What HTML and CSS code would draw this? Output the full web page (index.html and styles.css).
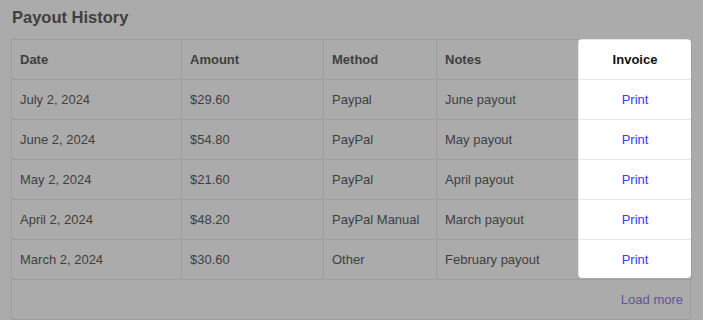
FILE: index.html
```html
<!DOCTYPE html>
<html lang="en">
<head>
    <meta charset="UTF-8">
    <meta name="viewport" content="width=device-width, initial-scale=1.0">
    <link rel="stylesheet" href="styles.css">
</head>
<body>

    <div class="payouts">
        <h2 class="payouts-title">Payout History</h2>

        <div class="table-wrap">
            <table class="payout-table">
                <colgroup>
                    <col class="col-date">
                    <col class="col-amount">
                    <col class="col-method">
                    <col class="col-notes">
                    <col class="col-invoice-w">
                </colgroup>
                <thead>
                    <tr>
                        <th>Date</th>
                        <th>Amount</th>
                        <th>Method</th>
                        <th>Notes</th>
                        <th class="col-invoice">Invoice</th>
                    </tr>
                </thead>
                <tbody>
                    <tr>
                        <td>July 2, 2024</td>
                        <td>$29.60</td>
                        <td>Paypal</td>
                        <td>June payout</td>
                        <td class="col-invoice"><a href="#" class="print-link">Print</a></td>
                    </tr>
                    <tr>
                        <td>June 2, 2024</td>
                        <td>$54.80</td>
                        <td>PayPal</td>
                        <td>May payout</td>
                        <td class="col-invoice"><a href="#" class="print-link">Print</a></td>
                    </tr>
                    <tr>
                        <td>May 2, 2024</td>
                        <td>$21.60</td>
                        <td>PayPal</td>
                        <td>April payout</td>
                        <td class="col-invoice"><a href="#" class="print-link">Print</a></td>
                    </tr>
                    <tr>
                        <td>April 2, 2024</td>
                        <td>$48.20</td>
                        <td>PayPal Manual</td>
                        <td>March payout</td>
                        <td class="col-invoice"><a href="#" class="print-link">Print</a></td>
                    </tr>
                    <tr>
                        <td>March 2, 2024</td>
                        <td>$30.60</td>
                        <td>Other</td>
                        <td>February payout</td>
                        <td class="col-invoice"><a href="#" class="print-link">Print</a></td>
                    </tr>
                </tbody>
            </table>

            <div class="table-footer">
                <a href="#" class="load-more">Load more</a>
            </div>

            <!-- tour spotlight on the invoice column -->
            <div class="tour-spot"></div>
        </div>
    </div>

</body>
</html>
```

FILE: styles.css
```css
body {
    margin: 0;
    font-family: 'Liberation Sans', Arial, sans-serif;
    background-color: #fff;
    color: #333;
    overflow: hidden;
}

.payouts {
    padding: 8px 12px 0 11px;
}

.payouts-title {
    margin: 0 0 12px 1px;
    font-size: 16.5px;
    line-height: 19px;
    font-weight: bold;
    color: #333;
}

.table-wrap {
    position: relative;
    width: 680px;
}

.payout-table {
    width: 680px;
    border-collapse: collapse;
    table-layout: fixed;
    font-size: 13px;
}

.col-date { width: 170px; }
.col-amount { width: 142px; }
.col-method { width: 113px; }
.col-notes { width: 142px; }
.col-invoice-w { width: 113px; }

.payout-table th,
.payout-table td {
    height: 39px;
    padding: 0 8px;
    border: 1px solid #e6e6e6;
    text-align: left;
    vertical-align: middle;
    white-space: nowrap;
}

.payout-table th {
    font-weight: bold;
    color: #333;
}

.payout-table .col-invoice {
    text-align: center;
    color: #111;
}

.print-link {
    color: #3b3bff;
    text-decoration: none;
}

.table-footer {
    height: 39px;
    border: 1px solid #e6e6e6;
    border-top: none;
    display: flex;
    align-items: center;
    justify-content: flex-end;
    padding-right: 7px;
    font-size: 13px;
}

.load-more {
    color: #6a5ee0;
    text-decoration: none;
}

.tour-spot {
    position: absolute;
    top: 0;
    right: 0;
    width: 113px;
    height: 239px;
    border-radius: 4px;
    box-shadow: 0 0 0 2000px rgba(77, 77, 77, 0.47);
    pointer-events: none;
}
```
